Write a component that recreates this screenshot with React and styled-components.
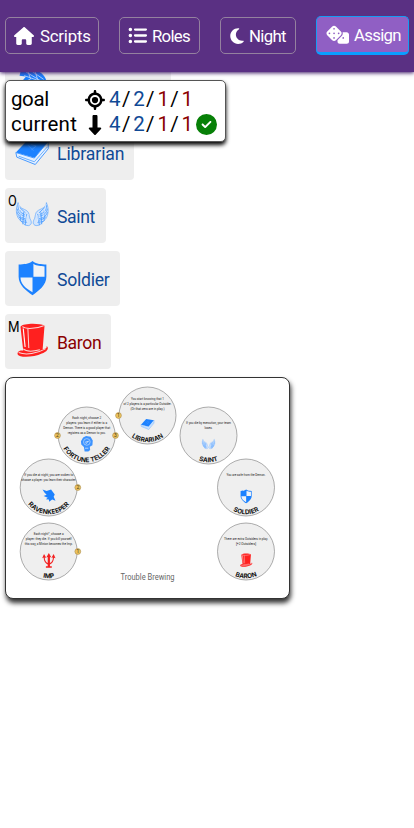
import React from "react";
import styled, { createGlobalStyle } from "styled-components";
import { FaHouse, FaListUl, FaMoon, FaDice, FaLocationCrosshairs, FaDownLong, FaCircleCheck } from "react-icons/fa6";

const GlobalStyle = createGlobalStyle`
  *, *::before, *::after { box-sizing: border-box; }
  body { margin: 0; background: #fff; color: #000; font-family: Roboto, "Liberation Sans", sans-serif; overflow: hidden; }
`;

const Page = styled.div`
  position: relative;
  width: 414px;
  height: 828px;
  overflow: hidden;
`;

const Header = styled.header`
  position: relative;
  z-index: 2;
  display: flex;
  align-items: center;
  justify-content: space-between;
  height: 72px;
  padding: 0 5px 1px;
  background: #5a3083;
  box-shadow: 0 1px 4px #3d1a66;
`;

const NavButton = styled.button`
  display: flex;
  align-items: center;
  gap: ${(p) => p.$gap || 6}px;
  width: ${(p) => p.$width}px;
  height: ${(p) => (p.$active ? 39 : 37)}px;
  padding: 0 0 0 ${(p) => p.$inset || 8}px;
  border: 1px solid ${(p) => (p.$active ? "#159cf4" : "#94819f")};
  border-bottom: ${(p) => (p.$active ? "3px solid #0a9eff" : "1px solid #94819f")};
  border-radius: 5px;
  background: ${(p) => (p.$active ? "#905fc4" : "transparent")};
  color: #fff;
  font: 400 16.8px/20px Roboto, sans-serif;
  letter-spacing: ${(p) => p.$track || 0}px;
  white-space: nowrap;
  svg { flex: none; }
`;

const NavLabel = styled.span`
  padding-top: 1px;
`;

const Main = styled.main`
  display: flex;
  flex-direction: column;
  align-items: flex-start;
  gap: 8px;
  margin-top: -10px;
  padding-left: 5px;
`;

const RoleCard = styled.div`
  position: relative;
  display: flex;
  align-items: center;
  gap: 6px;
  width: ${(p) => p.$width}px;
  height: 55px;
  padding-left: 9px;
  border-radius: 4px;
  background: #eee;
`;

const RoleIcon = styled.svg`
  flex: none;
  width: 37px;
  height: 37px;
  overflow: visible;
`;

const RoleName = styled.span`
  color: ${(p) => (p.$evil ? "#8b0000" : "#104a96")};
  font-size: 17.6px;
  line-height: 22px;
  letter-spacing: ${(p) => p.$track || 0}px;
  padding-top: 2px;
`;

const TypeBadge = styled.span`
  position: absolute;
  left: 3px;
  top: 5px;
  font-size: 15px;
  line-height: 17px;
  transform: scaleX(${(p) => p.$squeeze || 1});
  transform-origin: left;
`;

const Summary = styled.section`
  position: absolute;
  z-index: 3;
  left: 5px;
  top: 80px;
  width: 221px;
  height: 62px;
  padding: 6px 0 0 5px;
  border: 1px solid #555;
  border-radius: 5px;
  background: #fff;
  box-shadow: 0 3px 4px #000;
`;

const SummaryRow = styled.div`
  display: grid;
  grid-template-columns: 72px 24px repeat(7, 12.1px) 30px;
  align-items: center;
  height: 25px;
  font-size: 20.5px;
  line-height: 25px;
  text-align: center;
  svg { display: block; margin: auto; }
`;

const SummaryLabel = styled.span`
  text-align: left;
  letter-spacing: ${(p) => p.$track}px;
`;

const Count = styled.span`
  padding-left: 2px;
  color: ${(p) => p.$color || "#000"};
`;

const CheckMark = styled(FaCircleCheck)`
  justify-self: end;
  color: #078007;
`;

const Board = styled.section`
  width: 285px;
  height: 222px;
  border: 1px solid #333;
  border-radius: 8px;
  background: #fff;
  box-shadow: 1px 4px 5px #333;
`;

const Diagram = styled.svg`
  display: block;
  width: 283px;
  height: 220px;
`;

const BLUE = "#1d82ff";

const wing = (
  <g fill="none" stroke="#4b9cff" strokeWidth="1" strokeLinecap="round">
    <path d="M5 7C1 14 3 24 8 27c4 4 5 6 10 6 5-1 4-5 2-8-1-3-1-5-2-7-3-5-11-3-13-11Z" fill="#d3e5fc" strokeWidth=".7" />
    <path d="M5 10c0 6 3 8 8 10M4 14c1 5 5 7 9 8M4 18c2 5 6 6 10 7M6 23c3 3 6 3 9 4M9 28c3 1 5 1 7 1M8 16v11M12 18l-1 13M16 20l-2 12M7 12l7 6" />
    <path d="M6 9l3 14M18 20c-4 3-3 8-1 9" stroke="#e8f2ff" strokeWidth=".8" />
  </g>
);

const art = {
  wings: (
    <g transform="translate(2 1) scale(.94)">
      <g transform="translate(0 1) scale(.92 1)">{wing}</g>
      <g transform="translate(42 1) scale(-.92 1)">{wing}</g>
    </g>
  ),
  shield: (
    <g>
      <path d="M22 3c5 4 9 3 15 4v13c0 9-8 15-15 20C15 35 7 29 7 20V7c6-1 10 0 15-4Z" fill={BLUE} />
      <path d="M23 6c4 3 8 2 12 3v11H23ZM9 21h13v16C15 33 9 28 9 21Z" fill="#f1f3f6" />
    </g>
  ),
  hat: (
    <g fill="#ff201f">
      <path d="M9 6c3-4 21-4 26-1l-2 25c4 1 5-2 4-3 4 2 0 7-5 8-8 4-24 5-26 1-1-3 3-5 6-4Z" />
      <path d="M11 6c4 3 16 2 23-1M17 8l1 21M7 34c8 3 20 1 29-4M12 30c3 3 10 3 18 1" fill="none" stroke="#fbd7d7" strokeWidth="1.1" />
      <path d="M12 8l2 20" stroke="#fff" strokeWidth="1.2" />
    </g>
  ),
  book: (
    <g transform="translate(0 -2)">
      <path d="M4 24 18 9l21 3-14 18Z" fill={BLUE} />
      <path d="m4 24 20 6 15-18v8L25 37 5 29Z" fill="#e6f1ff" stroke="#3b93ff" strokeWidth="1" />
      <path d="m7 28 17 6 14-16" fill="none" stroke="#60a9ff" strokeWidth="1" />
      <path d="M20 15l6 2-5 4m-4-5 6 6" fill="none" stroke="#4797ff" strokeWidth="1" />
    </g>
  ),
  raven: (
    <path d="M5 3 16 7 28 3l10 13-3 6 5 11-9-3-8 6-1-6-8-1 5-4-11-5 8-3-6-6Z" fill={BLUE} />
  ),
  crest: (
    <g fill={BLUE} transform="translate(0 -3)">
      <path d="M9 6c5-4 14-4 19-1 6 3 9 8 10 15l-5-5 1 7-6-7-4 7-5-8-9 3 5-6-7-1Z" />
      <path d="m15 6 23 14M13 10l23 8M21 5l13 9M17 5l3 9M25 6l3 10" stroke="#b8d7ff" strokeWidth="1" />
    </g>
  ),
  orb: (
    <g fill="#3c93ff">
      <path d="M12 4 20 0l12 2 6 10-1 13-7 4 1 9-5 4H16l-2-12-7-7-1-9Z" />
      <circle cx="22" cy="16" r="9" fill="none" stroke="#b4d5ff" strokeWidth="2" />
      <path d="m17 17 10-3M19 22l7-8M17 33h9" stroke="#d5e8ff" strokeWidth="2" />
    </g>
  ),
  trident: (
    <g fill="#f32020">
      <path d="m9 3 6 10-4-1c0 8 3 13 8 15V11l-4 1 7-12 7 12-4-1v16c5-2 8-7 8-15l-4 1 6-10 5 11-4-1c-1 10-5 16-11 18v5h5v4H14v-4h5v-5C13 28 8 22 8 12l-4 2Z" />
    </g>
  ),
};

const roles = [
  { name: "", icon: "crest", width: 166 },
  { name: "Librarian", icon: "book", width: 129.4, track: -0.1 },
  { name: "Saint", icon: "wings", width: 101, badge: "O", squeeze: 0.85, track: -0.35 },
  { name: "Soldier", icon: "shield", width: 114.7, track: -0.25 },
  { name: "Baron", icon: "hat", width: 106.3, badge: "M", evil: true, squeeze: 0.88, track: -0.35 },
];

const tokens = [
  { id: "ft", name: "FORTUNE TELLER", x: 80.7, y: 57.5, icon: "orb", lines: [["Each night, choose 2", 29], ["players: you learn if either is a", 41], ["Demon. There is a good player that", 47], ["registers as a Demon to you.", 38]], top: -17, iconY: 7.5, arc: 0.05 },
  { id: "lib", name: "LIBRARIAN", x: 141.5, y: 37.5, icon: "book", lines: [["You start knowing that 1", 33], ["of 2 players is a particular Outsider.", 48], ["(Or that zero are in play.)", 34]], top: -16, iconY: 8, arc: 0 },
  { id: "saint", name: "SAINT", x: 202.5, y: 57.5, icon: "wings", lines: [["If you die by execution, your team", 45], ["loses.", 8]], top: -11.5, iconY: 8, arc: 0 },
  { id: "soldier", name: "SOLDIER", x: 240, y: 109.5, icon: "shield", lines: [["You are safe from the Demon.", 39]], top: -12, iconY: 8, arc: 0 },
  { id: "raven", name: "RAVENKEEPER", x: 42.7, y: 109.5, icon: "raven", lines: [["If you die at night, you are woken to", 49], ["choose a player: you learn their character.", 55]], top: -12, iconY: 8, arc: 0.05 },
  { id: "imp", name: "IMP", x: 42.7, y: 173.5, icon: "trident", lines: [["Each night*, choose a", 30], ["player: they die. If you kill yourself", 46], ["this way, a Minion becomes the Imp.", 48]], top: -16.5, iconY: 8.5, arc: -0.1 },
  { id: "baron", name: "BARON", x: 240, y: 173.5, icon: "hat", lines: [["There are extra Outsiders in play.", 44], ["[+2 Outsiders]", 20]], top: -11.5, iconY: 8, arc: -0.1 },
];

const markers = [
  [51.5, 57.5, 2], [109.5, 57.5, 3], [112.5, 37.5, 1], [71.8, 109.5, 2], [71.8, 173.5, 1],
];

function Token({ token: t }) {
  return (
    <g transform={`translate(${t.x} ${t.y})`}>
      <circle r="28.5" fill="#efefef" stroke="#777" strokeWidth=".6" />
      {t.lines.map(([line, width], i) => (
        <text key={line} y={t.top + i * 5} textAnchor="middle" fontSize="3.45" fill="#222" textLength={width} lengthAdjust="spacingAndGlyphs">{line}</text>
      ))}
      <g transform={`translate(-8 ${t.iconY - 7}) scale(.37)`}>{art[t.icon]}</g>
      <path id={`arc-${t.id}`} d="M-26.7 0A26.7 26.7 0 0 0 26.7 0" fill="none" />
      <text fontFamily="Inter, sans-serif" fontSize="6.4" fontWeight="700" fill="#111" textAnchor="middle" letterSpacing={t.arc}>
        <textPath href={`#arc-${t.id}`} startOffset="50%">{t.name}</textPath>
      </text>
    </g>
  );
}

export default function App() {
  return (
    <Page>
      <GlobalStyle />
      <Header>
        <NavButton $width={94} $track={-0.2}><FaHouse size={20} /><NavLabel>Scripts</NavLabel></NavButton>
        <NavButton $width={81} $gap={5} $track={-0.75}><FaListUl size={19} /><NavLabel>Roles</NavLabel></NavButton>
        <NavButton $width={76} $gap={3} $inset={7} $track={-0.65}><FaMoon size={18} /><NavLabel>Night</NavLabel></NavButton>
        <NavButton $width={93} $gap={5} $inset={9} $track={-0.7} $active><FaDice size={23} /><NavLabel>Assign</NavLabel></NavButton>
      </Header>
      <Main>
        {roles.map((r) => (
          <RoleCard key={r.icon} $width={r.width}>
            {r.badge && <TypeBadge $squeeze={r.squeeze}>{r.badge}</TypeBadge>}
            <RoleIcon viewBox="2 2 40 40">{art[r.icon]}</RoleIcon>
            <RoleName $evil={r.evil} $track={r.track}>{r.name}</RoleName>
          </RoleCard>
        ))}
        <Board>
          <Diagram viewBox="0 0 283 220">
            {tokens.map((t) => <Token key={t.id} token={t} />)}
            {markers.map(([x, y, n]) => (
              <g key={`${x}-${y}`} transform={`translate(${x} ${y})`}>
                <circle r="2.9" fill="#edc35d" stroke="#a78b50" strokeWidth=".6" />
                <text y="1.7" textAnchor="middle" fontSize="5" fill="#443814">{n}</text>
              </g>
            ))}
            <text x="141.5" y="201.5" textAnchor="middle" fontSize="8.6" fill="#666" textLength="54" lengthAdjust="spacingAndGlyphs">Trouble Brewing</text>
          </Diagram>
        </Board>
      </Main>
      <Summary>
        {["goal", "current"].map((label) => (
          <SummaryRow key={label}>
            <SummaryLabel $track={label === "goal" ? -0.4 : 0.2}>{label}</SummaryLabel>
            {label === "goal" ? <FaLocationCrosshairs size={20} /> : <FaDownLong size={20} />}
            <Count $color="#104a96">4</Count><Count>/</Count>
            <Count $color="#104a96">2</Count><Count>/</Count>
            <Count $color="#8b0000">1</Count><Count>/</Count>
            <Count $color="#8b0000">1</Count>
            {label === "current" && <CheckMark size={21} />}
          </SummaryRow>
        ))}
      </Summary>
    </Page>
  );
}
